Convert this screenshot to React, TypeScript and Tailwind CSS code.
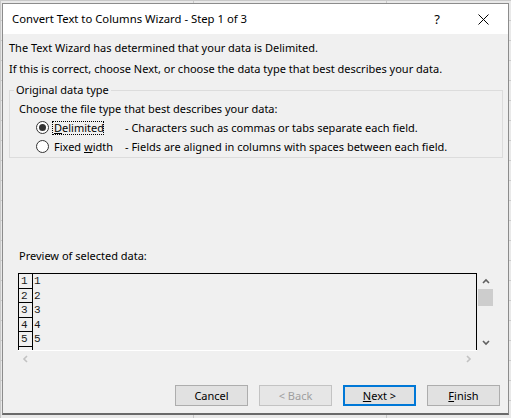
import React from "react";

const font = { fontFamily: '"Segoe UI", "Noto Sans", sans-serif' };

function Chevron({ dir, color }: { dir: "up" | "down" | "left" | "right"; color: string }) {
  const pts: Record<string, string> = {
    up: "1,5 4,2 7,5",
    down: "1,2 4,5 7,2",
    left: "5,1 2,4 5,7",
    right: "2,1 5,4 2,7",
  };
  return (
    <svg width="8" height="8" viewBox="0 0 8 8" className="block">
      <polyline points={pts[dir]} fill="none" stroke={color} strokeWidth="1.6" />
    </svg>
  );
}

function Radio({ checked }: { checked: boolean }) {
  return (
    <span className="w-[13px] h-[13px] rounded-full border border-[#333333] bg-white flex items-center justify-center shrink-0">
      {checked && <span className="w-[7px] h-[7px] rounded-full bg-[#333333]" />}
    </span>
  );
}

export default function App() {
  const rows = [1, 2, 3, 4, 5];
  return (
    <div
      className="w-[511px] h-[418px] overflow-hidden bg-[#e9e9e9] bg-[linear-gradient(#c9c9c9_1px,transparent_1px),linear-gradient(90deg,#c9c9c9_1px,transparent_1px)] bg-[size:193px_20px] pt-[3px] pl-[2px]"
      style={font}
    >
      <div className="w-[507px] h-[412px] border border-[#8c8c8c] border-b-2 border-b-[#6a6a6a] bg-[#f0f0f0] flex flex-col text-[11px] text-black leading-[16px]">
        {/* Title bar */}
        <div className="h-[30px] bg-white flex items-center pl-[9px] pr-0 shrink-0">
          <span className="text-[11.3px] text-black">Convert Text to Columns Wizard - Step 1 of 3</span>
          <span className="ml-auto mr-[38px] text-[13px]">?</span>
          <svg width="11" height="11" viewBox="0 0 11 11" className="mr-[19px]">
            <path d="M0.5 0.5 L10.5 10.5 M10.5 0.5 L0.5 10.5" stroke="#000" strokeWidth="1" />
          </svg>
        </div>

        <div className="pl-[6px] pr-[5px] pt-[6px] flex flex-col">
          <p className="h-[16px]">The Text Wizard has determined that your data is Delimited.</p>
          <p className="h-[16px] mt-[5px]">If this is correct, choose Next, or choose the data type that best describes your data.</p>

          <fieldset className="mt-[6px] border border-[#dcdcdc] pl-[4px] pr-0 pb-[6px] h-[75px]">
            <legend className="px-[2px] leading-[14px]">Original data type</legend>
            <p className="ml-[5px] mt-[4px]">Choose the file type that best describes your data:</p>
            <div className="flex items-center mt-[2px] h-[17px] whitespace-nowrap">
              <span className="ml-[22px]">
                <Radio checked />
              </span>
              <span className="ml-[3px] w-[52px] border border-dotted border-black leading-[12px] h-[14px] pl-px">
                <span className="underline underline-offset-[1px]">D</span>elimited
              </span>
              <span className="ml-[21px]">- Characters such as commas or tabs separate each field.</span>
            </div>
            <div className="flex items-center mt-[2px] h-[17px] whitespace-nowrap">
              <span className="ml-[22px]">
                <Radio checked={false} />
              </span>
              <span className="ml-[3px] w-[52px] pl-[2px]">
                Fixed <span className="underline underline-offset-[1px]">w</span>idth
              </span>
              <span className="ml-[21px]">- Fields are aligned in columns with spaces between each field.</span>
            </div>
          </fieldset>

          <p className="mt-[90px] ml-[10px]">Preview of selected data:</p>

          {/* Preview box */}
          <div className="mt-[9px] ml-[9px] flex">
            <div className="w-[459px] h-[77px] border-t border-l border-r border-black flex flex-col overflow-hidden bg-[#f0f0f0]">
              {rows.map((r) => (
                <div key={r} className="flex h-[14.5px] shrink-0">
                  <div
                    className="w-[14px] border-r border-b border-black text-[11px] leading-[14px] pl-[2px] text-[#1a1a1a]"
                    style={{ fontFamily: '"Liberation Mono", monospace' }}
                  >
                    {r}
                  </div>
                  <div
                    className="text-[11px] leading-[14px] pl-[1px] text-[#1a1a1a]"
                    style={{ fontFamily: '"Liberation Mono", monospace' }}
                  >
                    {r}
                  </div>
                </div>
              ))}
              <div className="w-[14px] border-r border-black flex-1" />
            </div>
            <div className="w-[17px] h-[77px] flex flex-col items-center">
              <div className="h-[16px] flex items-center justify-center pt-[2px]">
                <Chevron dir="up" color="#606060" />
              </div>
              <div className="w-[15px] h-[17px] bg-[#cdcdcd] mt-[0px]" />
              <div className="flex-1" />
              <div className="h-[14px] flex items-center justify-center pb-[1px]">
                <Chevron dir="down" color="#606060" />
              </div>
            </div>
          </div>
          <div className="ml-[9px] w-[459px] h-px bg-white" />
          <div className="ml-[9px] w-[459px] h-[15px] flex items-center justify-between px-[4px]">
            <Chevron dir="left" color="#c2c2c2" />
            <Chevron dir="right" color="#c2c2c2" />
          </div>

          {/* Buttons */}
          <div className="flex mt-[19px] ml-[166px] gap-[11px]">
            <button className="w-[73px] h-[21px] bg-[#e1e1e1] border border-[#adadad] text-[11px] leading-[16px]">
              Cancel
            </button>
            <button className="w-[73px] h-[21px] bg-[#e6e6e6] border border-[#c3c3c3] text-[11px] leading-[16px] text-[#9e9e9e]">
              &lt; Back
            </button>
            <button className="w-[73px] h-[21px] bg-[#e1e1e1] border-2 border-[#0078d7] text-[11px] leading-[16px]">
              <span className="underline underline-offset-[1px]">N</span>ext &gt;
            </button>
            <button className="w-[73px] h-[21px] bg-[#e1e1e1] border border-[#adadad] text-[11px] leading-[16px]">
              <span className="underline underline-offset-[1px]">F</span>inish
            </button>
          </div>
        </div>
      </div>
    </div>
  );
}
